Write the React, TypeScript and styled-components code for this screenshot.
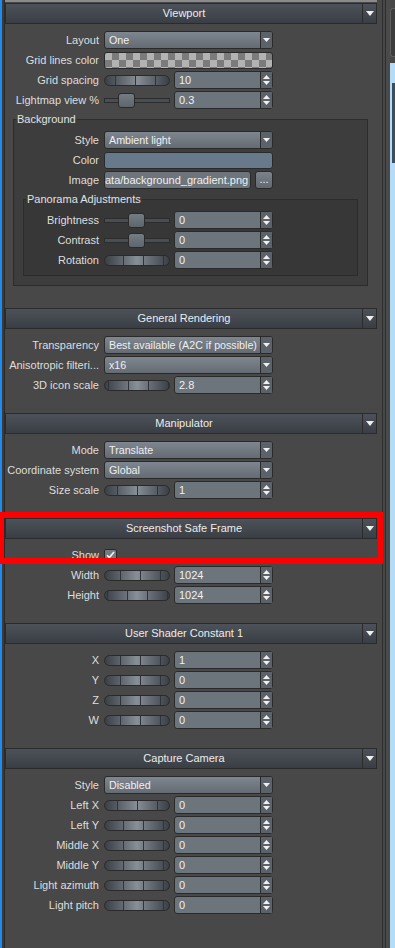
import React from 'react';
import styled, { createGlobalStyle } from 'styled-components';

const GlobalStyle = createGlobalStyle`
  html, body {
    margin: 0;
    padding: 0;
    background: #484848;
  }
  body {
    font-family: "Liberation Sans", Arial, sans-serif;
    font-size: 11px;
    color: #dedede;
  }
`;

const Page = styled.div`
  position: relative;
  display: flex;
  width: 395px;
  height: 948px;
  overflow: hidden;
  background: #484848;
`;

const LeftEdge = styled.div`
  flex: none;
  width: 2px;
  background: #1c8cf2;
  border-right: 2px solid #3b3b3b;
`;

const Panel = styled.div`
  flex: none;
  width: 377px;
  border-left: 1px solid #2a2a2a;
  display: flex;
  flex-direction: column;
`;

const TopStrip = styled.div`
  height: 2px;
  margin: 0 5px 1px 0;
  background: #8a8a8a;
`;

const RightStrip = styled.div`
  flex: 1;
  display: flex;
  border-left: 1px solid #2e2e2e;
`;

const Rail = styled.div`
  width: 2px;
  border-right: 1px solid #2e2e2e;
  background: #474747;
`;

const Gutter = styled.div`
  width: 4px;
  background: #4a4a4a;
`;

const Dock = styled.div`
  flex: 1;
  display: flex;
  flex-direction: column;
`;

const DockTop = styled.div`
  height: 63px;
  padding-top: 8px;
  box-sizing: border-box;
  background: #474747;
`;

const DockBox = styled.div`
  height: 47px;
  border: 1px solid #5e5e5e;
  border-right: none;
  border-radius: 3px 0 0 3px;
  background: #3c3c3c;
`;

const DockView = styled.div`
  flex: 1;
  background: #b4dcf7;
  padding: 20px 0 0 2px;
`;

const DockBar = styled.div`
  height: 80px;
  background: #3e4d5a;
`;

const Header = styled.div`
  display: flex;
  height: 21px;
  box-sizing: border-box;
  margin-right: 5px;
  border: 1px solid #2b2b2b;
  background: linear-gradient(#4d525a, #3a3e44);
  color: #ececec;
`;

const HeaderTitle = styled.div`
  flex: 1;
  text-align: center;
  line-height: 19px;
`;

const HeaderButton = styled.div`
  width: 13px;
  border-left: 1px solid #2b2b2b;
  display: flex;
  align-items: center;
  justify-content: center;
`;

const Body = styled.div<{ $bottom: number }>`
  padding: 6px 0 ${p => p.$bottom}px;
`;

const Row = styled.div`
  display: flex;
  align-items: center;
  gap: 5px;
  height: 20px;
`;

const Label = styled.div<{ $w: number }>`
  flex: none;
  width: ${p => p.$w}px;
  text-align: right;
  white-space: nowrap;
  color: #dedede;
`;

const Group = styled.fieldset<{ $left: number; $right: number; $bottom: number; $tone: string }>`
  margin: 3px ${p => p.$right}px ${p => (p.$bottom > 5 ? 4 : 0)}px ${p => p.$left}px;
  padding: 5px 0 ${p => p.$bottom}px;
  min-width: 0;
  border: 1px solid #2c2c2c;
  background: ${p => p.$tone};
`;

const GroupTitle = styled.legend`
  margin-left: 2px;
  padding: 0 1px;
  line-height: 12px;
  color: #e2e2e2;
`;

const Combo = styled.div`
  display: flex;
  width: 169px;
  height: 18px;
  box-sizing: border-box;
  border: 1px solid #2a2a2a;
  border-radius: 3px;
  background: linear-gradient(#7e868f, #646b73);
  overflow: hidden;
`;

const ComboText = styled.span`
  flex: 1;
  padding-left: 4px;
  font-size: 10.7px;
  line-height: 16px;
  color: #f0f0f0;
  white-space: nowrap;
`;

const ArrowBox = styled.span`
  flex: none;
  width: 11px;
  border-left: 1px solid #2a2a2a;
  background: #5b626a;
  display: flex;
  flex-direction: column;
  align-items: center;
  justify-content: center;
  gap: 2px;
`;

const Checker = styled.div`
  width: 169px;
  height: 17px;
  box-sizing: border-box;
  border: 1px solid #2a2a2a;
  border-radius: 3px;
  background: repeating-conic-gradient(#7b7b7b 0 25%, #b3b3b3 0 50%) 0 0 / 14px 14px;
`;

const Swatch = styled.div<{ $color: string }>`
  width: 169px;
  height: 17px;
  box-sizing: border-box;
  border: 1px solid #2a2a2a;
  border-radius: 3px;
  background: ${p => p.$color};
`;

const SpinWrap = styled.div`
  display: flex;
  align-items: center;
  gap: 4px;
  width: 169px;
`;

const Pill = styled.div<{ $first: number }>`
  width: 66px;
  height: 11px;
  box-sizing: border-box;
  border: 1px solid #2a2a2a;
  border-radius: 6px;
  background-image: linear-gradient(90deg, #30343a 1px, transparent 1px),
    linear-gradient(90deg, #3b4046, #6e757d 35%, #889097 50%, #6e757d 65%, #3b4046);
  background-size: 20px 100%, 100% 100%;
  background-position: ${p => p.$first}px 0, 0 0;
  background-repeat: repeat-x, no-repeat;
`;

const Track = styled.div`
  position: relative;
  display: flex;
  align-items: center;
  width: 66px;
  height: 15px;
  &::before {
    content: '';
    position: absolute;
    left: 0;
    right: 0;
    top: 5px;
    height: 3px;
    border: 1px solid #2c2c2c;
    background: #494e54;
  }
`;

const Handle = styled.div<{ $at: number }>`
  position: relative;
  margin-left: ${p => p.$at}px;
  width: 17px;
  height: 15px;
  box-sizing: border-box;
  border: 1px solid #2a2a2a;
  border-radius: 3px;
  background: linear-gradient(#747c84, #5e656c);
`;

const Field = styled.div<{ $w: number }>`
  display: flex;
  width: ${p => p.$w}px;
  height: 18px;
  box-sizing: border-box;
  border: 1px solid #2a2a2a;
  border-radius: 3px;
  background: #6c747c;
`;

const FieldText = styled.span<{ $end?: boolean }>`
  flex: 1;
  display: flex;
  justify-content: ${p => (p.$end ? 'flex-end' : 'flex-start')};
  padding: ${p => (p.$end ? '0 2px 0 0' : '0 4px')};
  line-height: 16px;
  color: #f0f0f0;
  white-space: nowrap;
`;

const DotsButton = styled.div`
  width: 18px;
  height: 18px;
  box-sizing: border-box;
  border: 1px solid #2a2a2a;
  border-radius: 3px;
  background: linear-gradient(#7a828b, #626970);
  color: #f0f0f0;
  text-align: center;
  line-height: 14px;
`;

const CheckBox = styled.div`
  width: 13px;
  height: 13px;
  box-sizing: border-box;
  border: 1px solid #2a2a2a;
  border-radius: 2px;
  background: #727a82;
  display: flex;
  align-items: center;
  justify-content: center;
`;

const Highlight = styled.div`
  position: absolute;
  left: 0;
  top: 512px;
  width: 383px;
  height: 52px;
  box-sizing: border-box;
  border-style: solid;
  border-color: #ff0000;
  border-width: 6px 5px 6px 4px;
  pointer-events: none;
`;

const Tri = ({ w, h, up }: { w: number; h: number; up?: boolean }) => (
  <svg width={w} height={h} viewBox={`0 0 ${w} ${h}`}>
    <polygon
      points={up ? `0,${h} ${w},${h} ${w / 2},0` : `0,0 ${w},0 ${w / 2},${h}`}
      fill="#f0f0f0"
    />
  </svg>
);

type Widget =
  | { kind: 'combo'; value: string }
  | { kind: 'checker' }
  | { kind: 'swatch'; color: string }
  | { kind: 'pill'; value: string; first: number }
  | { kind: 'slider'; value: string; at: number }
  | { kind: 'file'; value: string }
  | { kind: 'check' };

type Prop = { label: string; widget: Widget };

const SpinField = ({ value }: { value: string }) => (
  <Field $w={99}>
    <FieldText>{value}</FieldText>
    <ArrowBox>
      <Tri w={7} h={4} up />
      <Tri w={7} h={4} />
    </ArrowBox>
  </Field>
);

const renderWidget = (w: Widget) => {
  switch (w.kind) {
    case 'combo':
      return (
        <Combo>
          <ComboText>{w.value}</ComboText>
          <ArrowBox>
            <Tri w={7} h={4} />
          </ArrowBox>
        </Combo>
      );
    case 'checker':
      return <Checker />;
    case 'swatch':
      return <Swatch $color={w.color} />;
    case 'pill':
      return (
        <SpinWrap>
          <Pill $first={w.first} />
          <SpinField value={w.value} />
        </SpinWrap>
      );
    case 'slider':
      return (
        <SpinWrap>
          <Track>
            <Handle $at={w.at} />
          </Track>
          <SpinField value={w.value} />
        </SpinWrap>
      );
    case 'file':
      return (
        <SpinWrap>
          <Field $w={147}>
            <FieldText $end>{w.value}</FieldText>
          </Field>
          <DotsButton>...</DotsButton>
        </SpinWrap>
      );
    case 'check':
      return (
        <CheckBox>
          <svg width="9" height="8" viewBox="0 0 9 8">
            <path d="M1 4.2 L3.4 6.6 L8 1" stroke="#f4f4f4" strokeWidth="1.6" fill="none" />
          </svg>
        </CheckBox>
      );
  }
};

const Rows = ({ props, labelWidth }: { props: Prop[]; labelWidth: number }) => (
  <>
    {props.map(p => (
      <Row key={p.label}>
        <Label $w={labelWidth}>{p.label}</Label>
        {renderWidget(p.widget)}
      </Row>
    ))}
  </>
);

const SectionHeader = ({ title }: { title: string }) => (
  <Header>
    <HeaderTitle>{title}</HeaderTitle>
    <HeaderButton>
      <Tri w={8} h={5} />
    </HeaderButton>
  </Header>
);

const pill = (value: string, first: number): Widget => ({ kind: 'pill', value, first });

const viewportTop: Prop[] = [
  { label: 'Layout', widget: { kind: 'combo', value: 'One' } },
  { label: 'Grid lines color', widget: { kind: 'checker' } },
  { label: 'Grid spacing', widget: pill('10', 10) },
  { label: 'Lightmap view %', widget: { kind: 'slider', value: '0.3', at: 14 } },
];

const backgroundProps: Prop[] = [
  { label: 'Style', widget: { kind: 'combo', value: 'Ambient light' } },
  { label: 'Color', widget: { kind: 'swatch', color: '#68798b' } },
  { label: 'Image', widget: { kind: 'file', value: 'ata/background_gradient.png' } },
];

const panoramaProps: Prop[] = [
  { label: 'Brightness', widget: { kind: 'slider', value: '0', at: 24 } },
  { label: 'Contrast', widget: { kind: 'slider', value: '0', at: 24 } },
  { label: 'Rotation', widget: pill('0', 18) },
];

const sections: { title: string; props: Prop[] }[] = [
  {
    title: 'General Rendering',
    props: [
      { label: 'Transparency', widget: { kind: 'combo', value: 'Best available (A2C if possible)' } },
      { label: 'Anisotropic filteri...', widget: { kind: 'combo', value: 'x16' } },
      { label: '3D icon scale', widget: pill('2.8', 3) },
    ],
  },
  {
    title: 'Manipulator',
    props: [
      { label: 'Mode', widget: { kind: 'combo', value: 'Translate' } },
      { label: 'Coordinate system', widget: { kind: 'combo', value: 'Global' } },
      { label: 'Size scale', widget: pill('1', 12) },
    ],
  },
  {
    title: 'Screenshot Safe Frame',
    props: [
      { label: 'Show', widget: { kind: 'check' } },
      { label: 'Width', widget: pill('1024', 15) },
      { label: 'Height', widget: pill('1024', 2) },
    ],
  },
  {
    title: 'User Shader Constant 1',
    props: [
      { label: 'X', widget: pill('1', 15) },
      { label: 'Y', widget: pill('0', 15) },
      { label: 'Z', widget: pill('0', 15) },
      { label: 'W', widget: pill('0', 15) },
    ],
  },
  {
    title: 'Capture Camera',
    props: [
      { label: 'Style', widget: { kind: 'combo', value: 'Disabled' } },
      { label: 'Left X', widget: pill('0', 12) },
      { label: 'Left Y', widget: pill('0', 18) },
      { label: 'Middle X', widget: pill('0', 18) },
      { label: 'Middle Y', widget: pill('0', 18) },
      { label: 'Light azimuth', widget: pill('0', 18) },
      { label: 'Light pitch', widget: pill('0', 18) },
    ],
  },
];

const App: React.FC = () => {
  return (
    <Page>
      <GlobalStyle />
      <LeftEdge />
      <Panel>
        <TopStrip />
        <SectionHeader title="Viewport" />
        <Body $bottom={18}>
          <Rows props={viewportTop} labelWidth={94} />
          <Group $left={8} $right={14} $bottom={9} $tone="#3d3d3d">
            <GroupTitle>Background</GroupTitle>
            <Rows props={backgroundProps} labelWidth={85} />
            <Group $left={9} $right={9} $bottom={5} $tone="#373737">
              <GroupTitle>Panorama Adjustments</GroupTitle>
              <Rows props={panoramaProps} labelWidth={75} />
            </Group>
          </Group>
        </Body>
        {sections.map(s => (
          <React.Fragment key={s.title}>
            <SectionHeader title={s.title} />
            <Body $bottom={18}>
              <Rows props={s.props} labelWidth={94} />
            </Body>
          </React.Fragment>
        ))}
      </Panel>
      <RightStrip>
        <Rail />
        <Gutter />
        <Dock>
          <DockTop>
            <DockBox />
          </DockTop>
          <DockView>
            <DockBar />
          </DockView>
        </Dock>
      </RightStrip>
      <Highlight />
    </Page>
  );
};

export default App;
